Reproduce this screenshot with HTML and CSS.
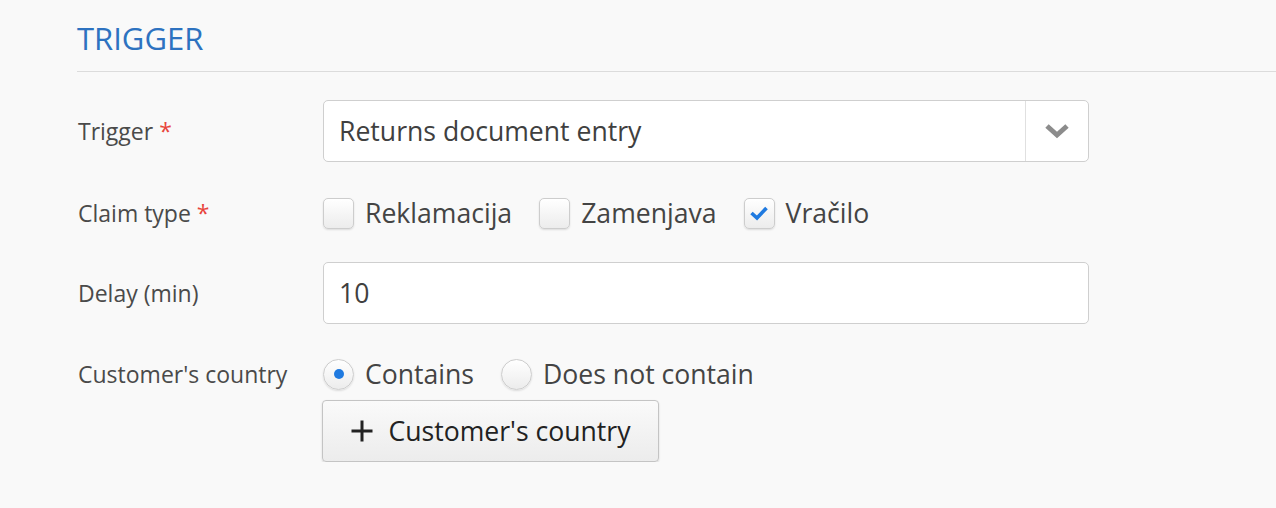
FILE: index.html
```html
<!DOCTYPE html>
<html>
<head>
<meta charset="utf-8">
<link rel="stylesheet" href="styles.css">
</head>
<body>
<section class="panel">
  <h2 class="title">TRIGGER</h2>
  <div class="form">
    <div class="row row-select">
      <div class="label">Trigger <span class="req">*</span></div>
      <div class="control">
        <div class="select">
          <span class="select-text">Returns document entry</span>
          <span class="select-arrow">
            <svg width="26" height="16" viewBox="0 0 26 16"><path d="M3 3 L13 12 L23 3" fill="none" stroke="#8c8c8c" stroke-width="5"/></svg>
          </span>
        </div>
      </div>
    </div>
    <div class="row row-check">
      <div class="label">Claim type <span class="req">*</span></div>
      <div class="control options">
        <label class="opt"><span class="box"></span>Reklamacija</label>
        <label class="opt"><span class="box"></span>Zamenjava</label>
        <label class="opt"><span class="box checked"><svg width="20" height="16" viewBox="0 0 20 16"><path d="M2.5 8 L8 13 L17.5 3" fill="none" stroke="#1f7ae0" stroke-width="3.6"/></svg></span>Vračilo</label>
      </div>
    </div>
    <div class="row row-input">
      <div class="label">Delay (min)</div>
      <div class="control">
        <div class="input">10</div>
      </div>
    </div>
    <div class="row-radio">
      <div class="row row-radio-line">
        <div class="label">Customer's country</div>
        <div class="control options radios">
          <label class="opt"><span class="radio on"></span>Contains</label>
          <label class="opt"><span class="radio"></span>Does not contain</label>
        </div>
      </div>
      <div class="row">
        <div class="label"></div>
        <button class="btn"><svg class="plus" width="24" height="24" viewBox="0 0 24 24"><path d="M12 1.5 V22.5 M1.5 12 H22.5" stroke="#222" stroke-width="3" fill="none"/></svg>Customer's country</button>
      </div>
    </div>
  </div>
</section>
</body>
</html>
```

FILE: styles.css
```css
html, body {
  margin: 0;
  padding: 0;
  background: #f9f9f9;
  font-family: "Open Sans", "Liberation Sans", sans-serif;
  color: #444;
}
.panel {
  padding: 0 0 0 77px;
}
.title {
  margin: 0;
  padding-top: 18px;
  padding-bottom: 13px;
  font-size: 31px;
  font-weight: 400;
  color: #2d72c0;
  line-height: 40px;
  border-bottom: 1px solid #dcdcdc;
}
.form {
  padding-top: 28px;
}
.row {
  display: flex;
  align-items: center;
}
.label {
  width: 246px;
  flex: none;
  font-size: 23px;
  color: #4a4a4a;
  padding-left: 1px;
  box-sizing: border-box;
}
.req {
  color: #e8453c;
}
.control {
  flex: none;
  width: 766px;
}
.select {
  height: 62px;
  box-sizing: border-box;
  border: 1px solid #cfcfcf;
  border-radius: 5px;
  background: #fff;
  display: flex;
  align-items: center;
}
.select-text {
  flex: 1;
  padding-left: 15px;
  font-size: 26.6px;
  color: #404040;
}
.select-arrow {
  width: 62px;
  height: 60px;
  border-left: 1px solid #e0e0e0;
  display: flex;
  align-items: center;
  justify-content: center;
}
.row-check {
  margin-top: 30px;
}
.options {
  display: flex;
  align-items: center;
  height: 42px;
}
.opt {
  display: flex;
  align-items: center;
  font-size: 26.6px;
  color: #444;
  margin-right: 27px;
}
.box {
  width: 31px;
  height: 31px;
  box-sizing: border-box;
  border: 1px solid #cdcdcd;
  border-radius: 5px;
  background: linear-gradient(#ffffff, #ececec);
  box-shadow: 0 1px 2px rgba(0,0,0,0.12);
  margin-right: 11px;
  display: flex;
  align-items: center;
  justify-content: center;
}
.row-input {
  margin-top: 28px;
}
.input {
  height: 62px;
  box-sizing: border-box;
  border: 1px solid #cfcfcf;
  border-radius: 5px;
  background: #fff;
  font-size: 26.6px;
  line-height: 60px;
  padding-left: 15px;
  color: #404040;
}
.row-radio {
  margin-top: 29px;
}
.radios .opt {
  margin-right: 27px;
}
.radio {
  width: 31px;
  height: 31px;
  box-sizing: border-box;
  border: 1px solid #cdcdcd;
  border-radius: 50%;
  background: linear-gradient(#ffffff, #ececec);
  box-shadow: 0 1px 2px rgba(0,0,0,0.12);
  margin-right: 11px;
  display: flex;
  align-items: center;
  justify-content: center;
}
.radio.on::after {
  content: "";
  width: 10px;
  height: 10px;
  border-radius: 50%;
  background: #1f7ae0;
}
.btn {
  margin-top: 5px;
  margin-left: -1px;
  height: 62px;
  width: 337px;
  box-sizing: border-box;
  border: 1px solid #c4c4c4;
  border-radius: 4px;
  background: linear-gradient(#fafafa, #ececec);
  box-shadow: 0 1px 2px rgba(0,0,0,0.15);
  font-family: "Open Sans", "Liberation Sans", sans-serif;
  font-size: 26.6px;
  color: #222;
  display: flex;
  align-items: center;
  justify-content: center;
  padding: 0;
}
.plus {
  margin-right: 14px;
}
```
